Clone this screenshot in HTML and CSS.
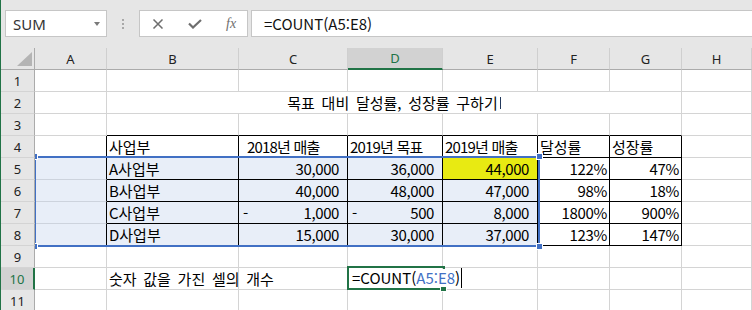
FILE: index.html
```html
<!DOCTYPE html>
<html lang="ko">
<head>
    <meta charset="UTF-8">
    <title>COUNT - Excel</title>
    <link rel="stylesheet" href="styles.css">
</head>
<body>
    <div class="window">
        <div class="toolbar">
            <div class="name-box">
                <span>SUM</span>
                <span class="caret-down"></span>
            </div>
            <div class="grip"><i></i><i></i><i></i></div>
            <div class="fx-buttons">
                <svg class="ico" width="12" height="10" viewBox="0 0 12 10">
                    <path d="M1.5 0.5 L10.5 9.5 M10.5 0.5 L1.5 9.5" stroke="#6e6e6e" stroke-width="1.5" fill="none"/>
                </svg>
                <svg class="ico" width="14" height="10" viewBox="0 0 14 10">
                    <path d="M1 4.5 L5 8.5 L13 1" stroke="#6e6e6e" stroke-width="2.2" fill="none"/>
                </svg>
                <span class="fx">fx</span>
            </div>
            <div class="formula-input">=COUNT(A5:E8)</div>
        </div>

        <div class="sheet">
            <!-- column headers -->
            <div class="corner"><span class="tri"></span></div>
            <div class="ch">A</div>
            <div class="ch">B</div>
            <div class="ch">C</div>
            <div class="ch active">D</div>
            <div class="ch">E</div>
            <div class="ch">F</div>
            <div class="ch">G</div>
            <div class="ch">H</div>

            <!-- 1 -->
            <div class="rh">1</div>
            <div class="cell"></div><div class="cell"></div><div class="cell"></div><div class="cell"></div>
            <div class="cell"></div><div class="cell"></div><div class="cell"></div><div class="cell"></div>

            <!-- 2 -->
            <div class="rh">2</div>
            <div class="cell"></div>
            <div class="cell title kr">목표 대비 달성률, 성장률 구하기<span class="ime"></span></div>
            <div class="cell"></div>

            <!-- 3 -->
            <div class="rh">3</div>
            <div class="cell"></div>
            <div class="cell bb"></div><div class="cell bb"></div><div class="cell bb"></div>
            <div class="cell bb"></div><div class="cell bb"></div><div class="cell bb"></div>
            <div class="cell"></div>

            <!-- 4 -->
            <div class="rh">4</div>
            <div class="cell br"></div>
            <div class="cell br bb">사업부</div>
            <div class="cell br bb yr indent">2018년 매출</div>
            <div class="cell br bb yr">2019년 목표</div>
            <div class="cell br bb yr">2019년 매출</div>
            <div class="cell br bb">달성률</div>
            <div class="cell br bb">성장률</div>
            <div class="cell"></div>

            <!-- 5 -->
            <div class="rh">5</div>
            <div class="cell sel br"></div>
            <div class="cell sel br bb">A사업부</div>
            <div class="cell sel br bb num">30,000</div>
            <div class="cell sel br bb num">36,000</div>
            <div class="cell br bb num hl">44,000</div>
            <div class="cell br bb pct">122%</div>
            <div class="cell br bb pct">47%</div>
            <div class="cell"></div>

            <!-- 6 -->
            <div class="rh">6</div>
            <div class="cell sel br"></div>
            <div class="cell sel br bb">B사업부</div>
            <div class="cell sel br bb num">40,000</div>
            <div class="cell sel br bb num">48,000</div>
            <div class="cell sel br bb num">47,000</div>
            <div class="cell br bb pct">98%</div>
            <div class="cell br bb pct">18%</div>
            <div class="cell"></div>

            <!-- 7 -->
            <div class="rh">7</div>
            <div class="cell sel br"></div>
            <div class="cell sel br bb">C사업부</div>
            <div class="cell sel br bb num neg"><span>-</span><span>1,000</span></div>
            <div class="cell sel br bb num neg"><span>-</span><span>500</span></div>
            <div class="cell sel br bb num">8,000</div>
            <div class="cell br bb pct">1800%</div>
            <div class="cell br bb pct">900%</div>
            <div class="cell"></div>

            <!-- 8 -->
            <div class="rh">8</div>
            <div class="cell sel br"></div>
            <div class="cell sel br bb">D사업부</div>
            <div class="cell sel br bb num">15,000</div>
            <div class="cell sel br bb num">30,000</div>
            <div class="cell sel br bb num">37,000</div>
            <div class="cell br bb pct">123%</div>
            <div class="cell br bb pct">147%</div>
            <div class="cell"></div>

            <!-- 9 -->
            <div class="rh">9</div>
            <div class="cell"></div><div class="cell"></div><div class="cell"></div><div class="cell"></div>
            <div class="cell"></div><div class="cell"></div><div class="cell"></div><div class="cell"></div>

            <!-- 10 -->
            <div class="rh active">10</div>
            <div class="cell"></div>
            <div class="cell kr">숫자 값을 가진 셀의 개수</div>
            <div class="cell"></div><div class="cell"></div><div class="cell"></div>
            <div class="cell"></div><div class="cell"></div><div class="cell"></div>

            <!-- 11 -->
            <div class="rh">11</div>
            <div class="cell"></div><div class="cell"></div><div class="cell"></div><div class="cell"></div>
            <div class="cell"></div><div class="cell"></div><div class="cell"></div><div class="cell"></div>

            <!-- overlays: referenced range and the cell being edited -->
            <div class="range">
                <span class="handle tl"></span>
                <span class="handle tr"></span>
                <span class="handle bl"></span>
                <span class="handle br-h"></span>
            </div>
            <div class="active-cell"><span class="fill-handle"></span></div>
            <div class="editor">=COUNT(<span class="ref">A5:E8</span>)<span class="text-caret"></span></div>
        </div>
    </div>
</body>
</html>
```

FILE: styles.css
```css
*, *:before, *:after {
    box-sizing: border-box;
}

body {
    margin: 0;
    font-family: 'Noto Sans CJK KR', sans-serif;
    background: #fff;
}

.window {
    width: 752px;
    height: 310px;
    overflow: hidden;
    border-left: 1px solid #217346;
}

/* formula bar */

.toolbar {
    height: 48px;
    background: #e6e6e6;
    display: flex;
    align-items: flex-start;
    padding: 10px 0 0 4px;
}

.name-box {
    width: 102px;
    height: 27px;
    background: #fff;
    border: 1px solid #c6c6c6;
    display: flex;
    align-items: center;
    justify-content: space-between;
    padding: 0 6px 0 7px;
    font-family: 'Noto Sans', sans-serif;
    font-size: 15px;
    color: #333;
}

.caret-down {
    width: 0;
    height: 0;
    border-left: 3.5px solid transparent;
    border-right: 3.5px solid transparent;
    border-top: 4px solid #7a7a7a;
}

.grip {
    width: 32px;
    height: 27px;
    display: flex;
    flex-direction: column;
    align-items: center;
    justify-content: center;
    gap: 2px;
}

.grip i {
    width: 2px;
    height: 2px;
    background: #a8a8a8;
}

.fx-buttons {
    width: 109px;
    height: 27px;
    background: #fff;
    border: 1px solid #c6c6c6;
    display: flex;
    align-items: center;
    padding-left: 12px;
    gap: 24px;
}

.fx {
    font-family: 'Liberation Serif', serif;
    font-style: italic;
    font-size: 14px;
    color: #6e6e6e;
}

.formula-input {
    flex: 1;
    height: 27px;
    margin-left: 3px;
    background: #fff;
    border: 1px solid #c6c6c6;
    border-right: none;
    padding-left: 12px;
    font-size: 15px;
    line-height: 25px;
    color: #111;
}

/* grid */

.sheet {
    position: relative;
    display: grid;
    grid-template-columns: 34px 72px 132px 109px 95px 95px 72px 72px 1fr;
    grid-auto-rows: 22px;
}

.corner, .ch, .rh {
    background: #e6e6e6;
    font-family: 'Noto Sans', sans-serif;
    font-size: 13px;
    color: #222;
    position: relative;
    z-index: 2;
}

.corner {
    border-right: 1px solid #ababab;
    border-bottom: 1px solid #ababab;
}

.tri {
    position: absolute;
    right: 2px;
    bottom: 3px;
    width: 0;
    height: 0;
    border-left: 15px solid transparent;
    border-bottom: 14px solid #b4b4b4;
}

.ch {
    border-right: 1px solid #cfcfcf;
    border-bottom: 1px solid #ababab;
    display: flex;
    align-items: center;
    justify-content: center;
}

.ch.active {
    background: #d2d2d2;
    color: #217346;
    border-bottom: 2px solid #217346;
}

.rh {
    border-right: 1px solid #ababab;
    border-bottom: 1px solid #d4d4d4;
    display: flex;
    align-items: center;
    justify-content: center;
}

.rh.active {
    background: #d2d2d2;
    color: #217346;
    border-right: 2px solid #217346;
}

.cell {
    border-right: 1px solid #d4d4d4;
    border-bottom: 1px solid #d4d4d4;
    font-size: 15px;
    line-height: 21px;
    color: #000;
    padding: 0 2px;
    white-space: nowrap;
    display: flex;
    align-items: center;
}

.kr {
    word-spacing: 2.5px;
}

.title {
    grid-column: span 6;
    justify-content: center;
}

.ime {
    display: inline-block;
    width: 1px;
    height: 12px;
    margin-left: 2px;
    background: #23395d;
}

.yr {
    letter-spacing: -0.8px;
}

.indent {
    padding-left: 8px;
}

.sel {
    background: #e8eef8;
    border-bottom-color: #cdd3dd;
    border-right-color: #cdd3dd;
}

.hl {
    background: #e8ea12;
}

.br {
    border-right-color: #000;
}

.bb {
    border-bottom-color: #000;
}

.num {
    justify-content: flex-end;
    padding-right: 8px;
    letter-spacing: -0.4px;
}

.num.neg {
    justify-content: space-between;
    padding-left: 4px;
}

.pct {
    justify-content: flex-end;
    padding-right: 2px;
    letter-spacing: -0.3px;
}

/* overlays */

.range {
    position: absolute;
    left: 33px;
    top: 108px;
    width: 506px;
    height: 91px;
    border: 2px solid #4170c4;
    z-index: 1;
}

.handle {
    position: absolute;
    width: 7px;
    height: 7px;
    background: #4170c4;
    border: 1px solid #fff;
}

.handle.tl { left: -5px; top: -5px; }
.handle.tr { right: -5px; top: -5px; }
.handle.bl { left: -5px; bottom: -5px; }
.handle.br-h { right: -5px; bottom: -5px; }

.active-cell {
    position: absolute;
    left: 346px;
    top: 218px;
    width: 98px;
    height: 24px;
    border: 2px solid #217346;
    z-index: 1;
}

.fill-handle {
    position: absolute;
    right: -4px;
    bottom: -4px;
    width: 7px;
    height: 7px;
    background: #217346;
    border: 1px solid #fff;
}

.editor {
    position: absolute;
    left: 348px;
    top: 221px;
    height: 18px;
    background: #fff;
    padding: 0 1px 0 3px;
    font-size: 15px;
    line-height: 18px;
    color: #000;
    white-space: nowrap;
    display: flex;
    align-items: center;
    z-index: 1;
}

.ref {
    color: #4170c4;
}

.text-caret {
    width: 1px;
    height: 20px;
    margin-left: 1px;
    background: #000;
}
```
